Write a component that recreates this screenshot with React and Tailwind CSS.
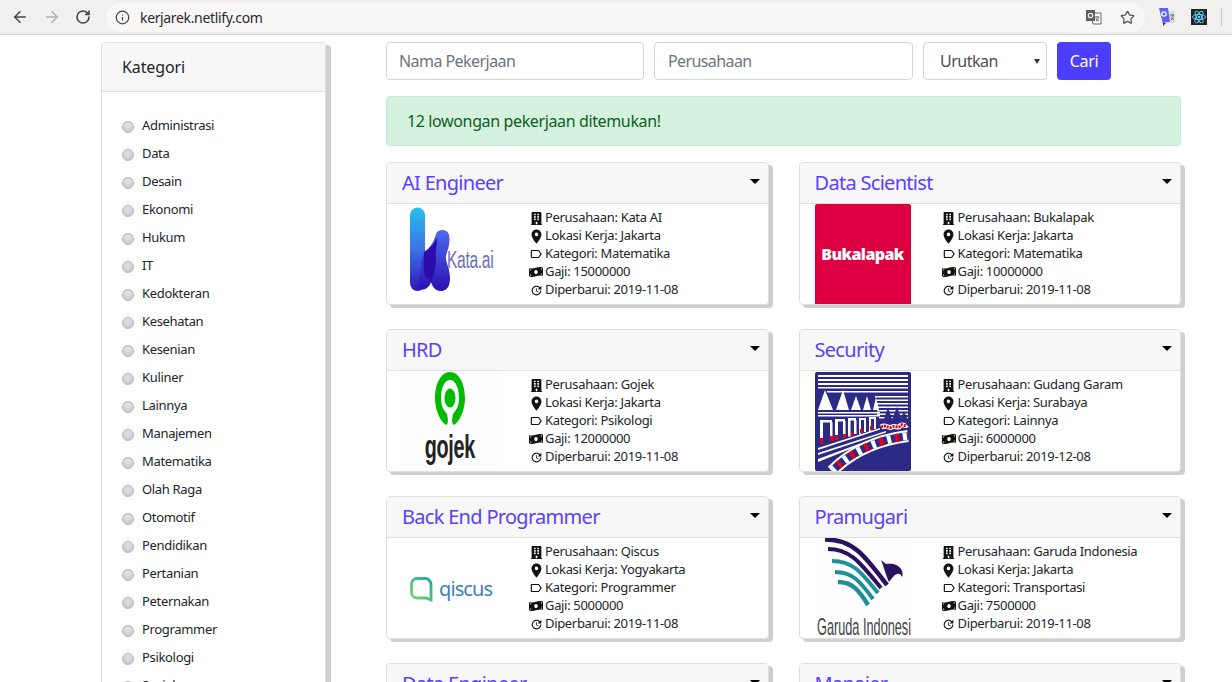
import React from "react";
import { ArrowLeft, ArrowRight, RotateCw, Info, Star } from "lucide-react";
import { FaBuilding, FaMoneyBillWave } from "react-icons/fa";
import { MdLocationOn, MdLabelOutline, MdUpdate } from "react-icons/md";

const categories = ["Administrasi","Data","Desain","Ekonomi","Hukum","IT","Kedokteran","Kesehatan","Kesenian","Kuliner","Lainnya","Manajemen","Matematika","Olah Raga","Otomotif","Pendidikan","Pertanian","Peternakan","Programmer","Psikologi","Sosial"];

function KataLogo() {
  return (
    <div className="relative w-24 h-[100px]">
      <svg width="60" height="90" viewBox="0 0 60 90" className="absolute left-[5px] top-[2px]">
        <defs>
          <linearGradient id="k1" x1="0" y1="0" x2="0" y2="1"><stop offset="0" stopColor="#27c0ea" /><stop offset=".5" stopColor="#3a73e8" /><stop offset="1" stopColor="#2a18b8" /></linearGradient>
          <linearGradient id="k2" x1="0" y1="0" x2="0" y2="1"><stop offset="0" stopColor="#4f6af0" /><stop offset="1" stopColor="#2a10b0" /></linearGradient>
        </defs>
        <path d="M3 9a7.500 7.500 0 0 1 15 0v68a7.500 8 0 0 1-15 0z" fill="url(#k1)" />
        <path d="M16 50c4-8 10-10 13-22 2-6 12-5 13 1 2 8-2 16-3 21-1 5 4 12 4 22 0 8-3 13-9 13s-9-5-10-9c-2 6-7 9-11 7-4-3-2-9 0-14 1-6 0-13 3-19z" fill="url(#k2)" />
        <path d="M17 46c5-3 10-7 13-15 0 8-2 16-1 24-1 9-3 16-5 22-2-4-3-5-5-5-2-4-3-10-2-26z" fill="#2b0cab" />
      </svg>
      <span className="absolute left-[45px] top-[42px] text-[23px] leading-[28px] text-[#6a70b8] font-['Liberation_Sans',sans-serif] font-light scale-x-[.68] origin-left tracking-[-0.5px]">Kata.ai</span>
    </div>
  );
}

function BukaLogo() {
  return (
    <div className="w-24 h-[100px] bg-[#dc0040] rounded-t-[2px] flex items-center justify-center">
      <span className="text-[16px] leading-none font-extrabold text-white font-['Open_Sans',sans-serif] tracking-[-0.6px]">Bukalapak</span>
    </div>
  );
}

function GojekLogo() {
  return (
    <div className="w-24 h-[100px] flex flex-col items-center bg-[#fdfdfd]">
      <svg width="30" height="58" viewBox="0 0 30 58" className="mt-[1px]">
        <path fillRule="evenodd" fill="#00bb00" d="M15 0C6 0 0 12 0 26c0 12 5 23 11 27 1-.5 2-2 2-5l-1-6C7 37 6 31 6 26 6 15 10 8 15 8s9 7 9 18c0 5-1 11-6 16l-1 6c0 3 1 4.500 2 5 6-4 11-15 11-27C30 12 24 0 15 0z" />
        <ellipse cx="15" cy="26" rx="5.500" ry="9.500" fill="#00bb00" />
      </svg>
      <span className="mt-[-4px] text-[33px] leading-[42px] font-bold text-[#222] font-['Liberation_Sans',sans-serif] scale-x-[.6] tracking-[-0.5px]">gojek</span>
    </div>
  );
}

function GudangLogo() {
  return (
    <div className="w-24 h-[100px] flex items-start pt-[1px]">
      <svg width="96" height="99" viewBox="0 0 96 99">
        <rect width="96" height="99" rx="2" fill="#2b2a84" />
        <g fill="#fff">
          <rect x="3" y="3" width="90" height="2" /><rect x="3" y="7" width="90" height="2" /><rect x="3" y="11" width="90" height="2" /><rect x="3" y="15" width="90" height="1.500" />
          <rect x="12" y="19" width="81" height="1.500" />
          <rect x="60" y="24" width="33" height="1.500" /><rect x="62" y="27.500" width="31" height="1.500" /><rect x="62" y="31" width="31" height="1.500" /><rect x="62" y="34.500" width="31" height="1.500" /><rect x="62" y="38" width="31" height="1.500" /><rect x="62" y="41.500" width="31" height="1.500" /><rect x="64" y="45" width="29" height="1.500" />
          <path d="M3 38L10 18l8 20zM21 38l7-20 6 20zM36 38l5-14 5 14zM48 38l4-14 4 14zM58 38l3-13 3 13z" />
          <path d="M3 40h62v1.500H3zM3 43h62v1.500H3z" />
          <path d="M5 48h12v2.500H8v21H5zM15 50h2.500v19H15zM20 47h10v2.500h-7v18h-3zM28 49h2.500v16H28zM33 46h8v2.500h-5.500v16H33zM39 48h2.500v14H39zM44 46h7v2h-5v14.500h-2zM49 48h2v12h-2zM54 45h7v2h-5v13h-2zM59 47h2v10h-2z" />
          <path d="M3 76l62-20v1.500L3 78zM3 81l68-22v1.500L3 83zM3 87l46-17v1.500L3 90z" />
        </g>
        <g fill="none">
          <path d="M17 99C36 80 62 68 93 64" stroke="#fff" strokeWidth="12" />
          <path d="M17 99C36 80 62 68 93 64" stroke="#2b2a84" strokeWidth="8" />
          <path d="M17 99C36 80 62 68 93 64" stroke="#fff" strokeWidth="8" strokeDasharray="4 12" />
          <path d="M17 99C36 80 62 68 93 64" stroke="#e2001a" strokeWidth="8" strokeDasharray="4 12" strokeDashoffset="8" />
          <path d="M66 55c5-3 7 2 11 0s6 2 8-1 5 1 7-1" stroke="#fff" strokeWidth="5" />
          <path d="M66 55c5-3 7 2 11 0s6 2 8-1 5 1 7-1" stroke="#e2001a" strokeWidth="3" strokeDasharray="2 1" />
        </g>
        <path d="M68 50l5-15 5 15zM77 48l5-13 5 13zM85 48l4-9 4 9z" fill="#2b2a84" />
        <g fill="#e2001a">
          <path d="M5 66h3v6H5zM15 64h4v5h-4zM20 63h3v5h-3zM28 62h3v4h-3zM36 60h3v4h-3zM45 57h3v4h-3zM55 54h3v4h-3z" />
        </g>
      </svg>
    </div>
  );
}

function QiscusLogo() {
  return (
    <div className="w-24 h-[100px] flex items-center pl-[8px] pt-[2px]">
      <svg width="23" height="25" viewBox="0 0 23 25">
        <defs><linearGradient id="q1" x1="0" y1="1" x2="1" y2="0"><stop offset="0" stopColor="#7ad86a" /><stop offset="1" stopColor="#22a6a0" /></linearGradient></defs>
        <path d="M7 1.500h8a6 6 0 0 1 6 6v15.500l-5-2H7a5.500 5.500 0 0 1-5.500-5.500V7A5.500 5.500 0 0 1 7 1.500z" fill="none" stroke="url(#q1)" strokeWidth="2.800" />
      </svg>
      <span className="ml-[6px] text-[20px] leading-none text-[#3b82b6] font-['Noto_Sans',sans-serif] tracking-[-0.9px]">qiscus</span>
    </div>
  );
}

function GarudaLogo() {
  return (
    <div className="relative w-24 h-[100px] bg-[#fdfdfd]">
      <svg width="96" height="76" viewBox="0 0 96 76" className="absolute left-0 top-0" fill="none">
        <g stroke="#2a1261">
          <path d="M10 1.500C38 1 50 18 72 47" strokeWidth="4.500" />
          <path d="M13 11C36 11 46 26 66 50" strokeWidth="4" />
        </g>
        <path d="M66 22l5 4c6-1 12 0 15 5 2 3 2 6 1 8-1-3-3-4-5-3-3 1-5 4-8 8-3-6-5-15-8-22z" fill="#2a1261" />
        <g stroke="#1f8f98">
          <path d="M17 23C38 23 46 34 63 55" strokeWidth="4" />
          <path d="M20 34C37 34 45 43 58 61" strokeWidth="4" />
          <path d="M23 44C37 44 44 52 53 67" strokeWidth="4.500" />
        </g>
      </svg>
      <span className="absolute left-[2px] top-[77px] text-[24px] leading-[24px] text-[#444] font-['Liberation_Sans',sans-serif] whitespace-nowrap scale-x-[.53] origin-left">Garuda Indonesia</span>
    </div>
  );
}

const jobs = [
  { t: "AI Engineer", c: "Kata AI", l: "Jakarta", k: "Matematika", g: "15000000", d: "2019-11-08", logo: <KataLogo /> },
  { t: "Data Scientist", c: "Bukalapak", l: "Jakarta", k: "Matematika", g: "10000000", d: "2019-11-08", logo: <BukaLogo /> },
  { t: "HRD", c: "Gojek", l: "Jakarta", k: "Psikologi", g: "12000000", d: "2019-11-08", logo: <GojekLogo /> },
  { t: "Security", c: "Gudang Garam", l: "Surabaya", k: "Lainnya", g: "6000000", d: "2019-12-08", logo: <GudangLogo /> },
  { t: "Back End Programmer", c: "Qiscus", l: "Yogyakarta", k: "Programmer", g: "5000000", d: "2019-11-08", logo: <QiscusLogo /> },
  { t: "Pramugari", c: "Garuda Indonesia", l: "Jakarta", k: "Transportasi", g: "7500000", d: "2019-11-08", logo: <GarudaLogo /> },
  { t: "Data Engineer", c: "Kata AI", l: "Jakarta", k: "Data", g: "9000000", d: "2019-11-08", logo: null },
  { t: "Manajer", c: "Gojek", l: "Jakarta", k: "Manajemen", g: "9000000", d: "2019-11-08", logo: null },
];

function Row({ icon, children }) {
  return (
    <div className="flex items-center h-[18px] whitespace-nowrap">
      <span className="w-[12px] h-[12px] flex items-center justify-center mr-[3px] text-[#111]">{icon}</span>
      <span>{children}</span>
    </div>
  );
}

function Card({ job }) {
  return (
    <div className="h-[143px] bg-white border border-[#dfdfdf] rounded-[4px] shadow-[4px_3px_0_#cfcfcf] flex flex-col">
      <div className="h-[41px] shrink-0 bg-[#f7f7f7] border-b border-[#dfdfdf] rounded-t-[3px] pl-[15px] pr-[8px] flex items-center justify-between">
        <span className="text-[20px] leading-[24px] text-[#5a41ff] tracking-[-0.7px]">{job.t}</span>
        <span className="w-0 h-0 mb-[3px] border-x-[5px] border-x-transparent border-t-[5px] border-t-black" />
      </div>
      <div className="flex pl-[15px]">
        <div className="w-24 h-[100px] shrink-0 overflow-hidden">{job.logo}</div>
        <div className="ml-[32px] pt-[5px] text-[13px] text-[#212529] tracking-[-0.33px]">
          <Row icon={<FaBuilding size={13} className="shrink-0" />}>Perusahaan: {job.c}</Row>
          <Row icon={<MdLocationOn size={17} className="shrink-0" />}>Lokasi Kerja: {job.l}</Row>
          <Row icon={<MdLabelOutline size={14} className="shrink-0" />}>Kategori: {job.k}</Row>
          <Row icon={<FaMoneyBillWave size={14} className="shrink-0" />}>Gaji: {job.g}</Row>
          <Row icon={<MdUpdate size={13} className="shrink-0" />}>Diperbarui: {job.d}</Row>
        </div>
      </div>
    </div>
  );
}

function Browser() {
  return (
    <div className="h-[35px] shrink-0 bg-[#f1f0ee] border-b border-[#cfcfcf] flex items-center">
      <div className="flex items-center pl-[11px] gap-[14px] text-[#44474a]">
        <ArrowLeft size={18} strokeWidth={2} />
        <ArrowRight size={18} strokeWidth={2} className="text-[#aeb0b2]" />
        <RotateCw size={16} strokeWidth={2.4} />
      </div>
      <div className="ml-[15px] w-[1039px] h-[29px] rounded-full bg-[#f8f7f6] flex items-center pl-[9px] pr-[10px]">
        <Info size={15} strokeWidth={2} className="text-[#44474a]" />
        <span className="ml-[10px] text-[14px] text-[#262a2e] tracking-[-0.35px]">kerjarek.netlify.com</span>
        <div className="ml-auto flex items-center gap-[18px]">
          <svg width="16" height="15" viewBox="0 0 16 15">
            <path d="M5 3h10v11H7z" fill="#fff" stroke="#666" strokeWidth="1" />
            <rect x="0" y="0" width="9" height="11" fill="#5f5f5f" />
            <circle cx="4.500" cy="5.500" r="2.200" fill="none" stroke="#fff" strokeWidth="1.100" />
            <path d="M9 7h4M11 6v1M10 11c1.500-1 2.500-2.500 3-4M10 8c.5 1.500 1.500 2.500 3 3" stroke="#555" strokeWidth=".9" fill="none" />
          </svg>
          <Star size={15} strokeWidth={2} className="text-[#555]" />
        </div>
      </div>
      <div className="ml-[14px] flex items-center">
        <svg width="16" height="18" viewBox="0 0 16 18" className="mt-[-1px]">
          <rect x="6" y="3" width="10" height="12" fill="#dcdcdc" />
          <path d="M0 0h9l2 14H4v2z" fill="#5b63f2" />
          <circle cx="5" cy="6" r="2.200" fill="none" stroke="#fff" strokeWidth="1.200" />
          <path d="M4 14v4l3-3z" fill="#4b1fa8" />
          <path d="M11 7h4M13 6v1M12 12c1.500-1 2-3 2.500-5M12 8.500c.5 1.500 1.500 2.500 3 3" stroke="#666" strokeWidth=".9" fill="none" />
        </svg>
        <svg width="16" height="16" viewBox="0 0 16 16" className="ml-[16px]">
          <rect width="16" height="16" fill="#20232a" />
          <g fill="none" stroke="#61dafb" strokeWidth=".9">
            <ellipse cx="8" cy="8" rx="6.500" ry="2.600" />
            <ellipse cx="8" cy="8" rx="6.500" ry="2.600" transform="rotate(60 8 8)" />
            <ellipse cx="8" cy="8" rx="6.500" ry="2.600" transform="rotate(120 8 8)" />
          </g>
          <circle cx="8" cy="8" r="1.300" fill="#61dafb" />
        </svg>
        <span className="ml-[14px] w-px h-[18px] bg-[#c8c8c8]" />
      </div>
    </div>
  );
}

export default function App() {
  return (
    <div className="h-[682px] w-[1232px] overflow-hidden bg-white font-['Noto_Sans',sans-serif] flex flex-col">
      <Browser />
      <div className="flex pt-[7px] pl-[101px] min-h-0 flex-1">
        <aside className="w-[225px] shrink-0 h-[800px] bg-white border border-[#dfdfdf] rounded-t-[4px] shadow-[5px_3px_0_#cfcfcf]">
          <div className="h-[49px] bg-[#f7f7f7] border-b border-[#dfdfdf] rounded-t-[3px] pl-[20px] flex items-center text-[16px] text-[#212529] tracking-[-0.1px]">Kategori</div>
          <div className="pt-[19px] pl-[20px]">
            {categories.map((c) => (
              <div key={c} className="h-[28px] flex items-center text-[13px] leading-[18px] text-[#212529] tracking-[-0.33px]">
                <span className="w-[12px] h-[12px] mt-[3px] rounded-full border border-[#b4b4b4] bg-[radial-gradient(circle_at_50%_30%,#e4e4e4,#c4c4c4)]" />
                <span className="ml-[8px]">{c}</span>
              </div>
            ))}
          </div>
        </aside>
        <main className="ml-[60px] w-[795px] shrink-0">
          <div className="flex gap-[10px]">
            <div className="w-[258px] h-[38px] border border-[#ced4da] rounded-[4px] pl-[12px] flex items-center text-[16px] text-[#6c757d] tracking-[-0.55px]">Nama Pekerjaan</div>
            <div className="w-[259px] h-[38px] border border-[#ced4da] rounded-[4px] pl-[13px] flex items-center text-[16px] text-[#6c757d] tracking-[-0.6px]">Perusahaan</div>
            <div className="w-[124px] h-[38px] border border-[#ced4da] rounded-[4px] pl-[16px] pr-[6px] flex items-center justify-between text-[16px] text-[#495057] tracking-[-0.5px]">
              <span>Urutkan</span>
              <span className="w-0 h-0 border-x-[3px] border-x-transparent border-t-[5px] border-t-[#333]" />
            </div>
            <div className="w-[54px] h-[38px] rounded-[4px] bg-[#4d3dff] text-white text-[16px] tracking-[-0.3px] flex items-center justify-center">Cari</div>
          </div>
          <div className="mt-[16px] h-[50px] bg-[#d4f2dd] border border-[#c3ecce] rounded-[4px] pl-[20px] flex items-center text-[16px] text-[#0f5c1f] tracking-[-0.37px]">12 lowongan pekerjaan ditemukan!</div>
          <div className="mt-[16px] grid grid-cols-2 gap-x-[30px] gap-y-[24px]">
            {jobs.map((j) => <Card key={j.t} job={j} />)}
          </div>
        </main>
      </div>
    </div>
  );
}
